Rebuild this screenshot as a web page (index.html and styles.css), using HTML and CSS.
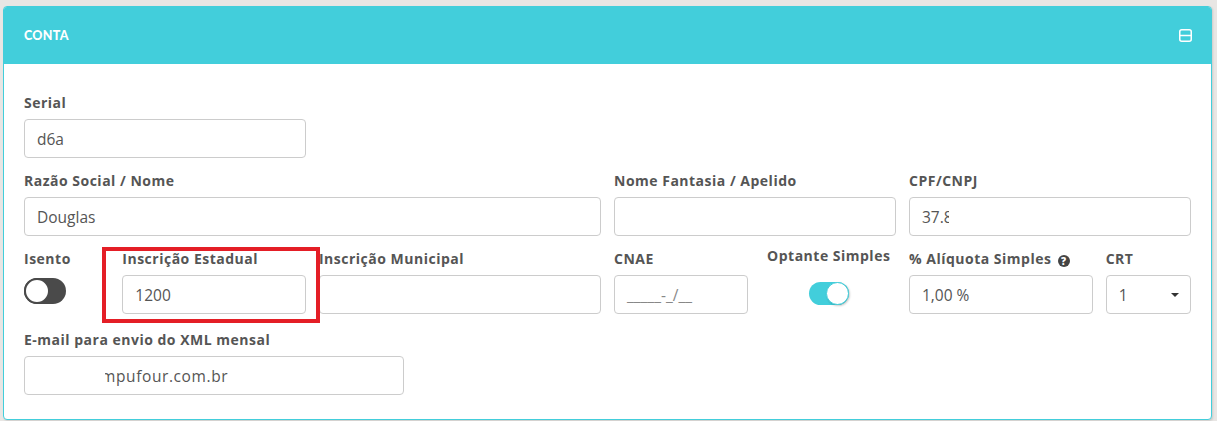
FILE: index.html
```html
<!DOCTYPE html>
<html lang="pt-BR">
<head>
<meta charset="utf-8">
<title>Conta</title>
<link rel="stylesheet" href="styles.css">
</head>
<body>
<section class="card">
  <header class="card-header">
    <h2 class="card-title">CONTA</h2>
    <svg class="collapse-icon" width="13" height="13" viewBox="0 0 13 13" aria-hidden="true">
      <rect x="0.75" y="0.75" width="11.5" height="11.5" rx="2" fill="none" stroke="#fff" stroke-width="1.5"/>
      <line x1="1" y1="6.5" x2="12" y2="6.5" stroke="#fff" stroke-width="1.5"/>
    </svg>
  </header>
  <div class="card-body">
    <div class="row">
      <div class="col col-3">
        <label class="lbl">Serial</label>
        <div class="field">d6a</div>
      </div>
    </div>
    <div class="row">
      <div class="col col-6">
        <label class="lbl">Razão Social / Nome</label>
        <div class="field">Douglas</div>
      </div>
      <div class="col col-3">
        <label class="lbl">Nome Fantasia / Apelido</label>
        <div class="field"></div>
      </div>
      <div class="col col-3">
        <label class="lbl">CPF/CNPJ</label>
        <div class="field"><span class="clip-cpf">37.8</span></div>
      </div>
    </div>
    <div class="row row-3">
      <div class="col col-1">
        <label class="lbl">Isento</label>
        <div class="switch switch-off"><span class="knob"></span></div>
      </div>
      <div class="col col-2">
        <label class="lbl">Inscrição Estadual</label>
        <div class="field">1200</div>
      </div>
      <div class="col col-3">
        <label class="lbl">Inscrição Municipal</label>
        <div class="field"></div>
      </div>
      <div class="col col-15">
        <label class="lbl">CNAE</label>
        <div class="field placeholder">_____-_/__</div>
      </div>
      <div class="col col-15 center">
        <label class="lbl lbl-up">Optante Simples</label>
        <div class="switch switch-on"><span class="knob"></span></div>
      </div>
      <div class="col col-2">
        <label class="lbl">% Alíquota Simples <span class="help">?</span></label>
        <div class="field">1,00 %</div>
      </div>
      <div class="col col-1">
        <label class="lbl">CRT</label>
        <div class="field select">1<span class="caret"></span></div>
      </div>
    </div>
    <div class="row last">
      <div class="col col-4">
        <label class="lbl">E-mail para envio do XML mensal</label>
        <div class="field"><span class="email-pad"></span><span class="clip-mail"><span class="clip-inner">mpufour.com.br</span></span></div>
      </div>
    </div>
    <div class="highlight"></div>
  </div>
</section>
</body>
</html>
```
FILE: styles.css
```css
* { box-sizing: border-box; }
html, body { margin: 0; padding: 0; }
body {
  background: #e8e6e4;
  font-family: "Open Sans", "Lato", sans-serif;
  padding: 6px 5px 0 3px;
  height: 421px;
  overflow: hidden;
}
.card {
  background: #fff;
  border: 1px solid #42cedb;
  border-radius: 4px;
  box-shadow: 1px 1px 2px rgba(0,0,0,0.12);
}
.card-header {
  background: #42cedb;
  height: 57px;
  display: flex;
  align-items: center;
  justify-content: space-between;
  padding: 0 19px 0 20px;
  border-radius: 3px 3px 0 0;
}
.card-title {
  margin: 0;
  color: #fff;
  font-family: "Lato", sans-serif;
  font-size: 12.5px;
  font-weight: 900;
  letter-spacing: 0.3px;
}
.collapse-icon { display: block; }
.card-body {
  position: relative;
  padding: 29px 20px 24px 20px;
}
.row {
  display: flex;
  margin: 0 -6.5px 13px -6.5px;
}
.row-3 { margin-bottom: 16px; }
.row.last { margin-bottom: 0; }
.col { padding: 0 6.5px; }
.col-1 { width: 8.3333%; }
.col-2 { width: 16.6667%; }
.col-3 { width: 25%; }
.col-4 { width: 33.3333%; }
.col-6 { width: 50%; }
.col-15 { width: 12.5%; }
.center { text-align: center; display: flex; flex-direction: column; align-items: center; }
.lbl {
  display: block;
  height: 20px;
  line-height: 20px;
  margin-bottom: 6px;
  font-size: 14px;
  font-weight: 700;
  letter-spacing: 0.5px;
  color: #555;
  white-space: nowrap;
}
.lbl-up { margin-top: -3px; margin-bottom: 9px; }
.field {
  height: 39px;
  border: 1px solid #ccc;
  border-radius: 4px;
  padding: 0 12px;
  display: flex;
  align-items: center;
  font-size: 15.5px;
  color: #555;
  white-space: nowrap;
  overflow: hidden;
}
.placeholder { color: #888; }
.select { position: relative; justify-content: space-between; padding-right: 11px; }
.caret {
  width: 0; height: 0;
  border-left: 4px solid transparent;
  border-right: 4px solid transparent;
  border-top: 4px solid #333;
}
.clip-cpf { display: inline-block; overflow: hidden; width: 27px; }
.email-pad { display: inline-block; width: 68px; }
.clip-mail { display: inline-block; overflow: hidden; }
.clip-inner { display: inline-block; margin-left: -4px; letter-spacing: 0.6px; }
.help {
  display: inline-flex;
  align-items: center;
  justify-content: center;
  width: 12px; height: 12px;
  border-radius: 50%;
  background: #444;
  color: #fff;
  font-size: 10px;
  font-weight: 800;
  letter-spacing: 0;
  vertical-align: -1px;
  margin-left: 2px;
}
.switch {
  position: relative;
  border-radius: 13px;
}
.switch-off {
  width: 42px; height: 26px;
  margin-top: 9px;
  background: #4a4a4a;
}
.switch-off .knob {
  position: absolute;
  left: 0; top: 0;
  width: 26px; height: 26px;
  border-radius: 50%;
  background: #fff;
  border: 2px solid #4a4a4a;
}
.switch-on {
  width: 40px; height: 23px;
  margin-top: 7px;
  background: #42cedb;
}
.switch-on .knob {
  position: absolute;
  right: 0; top: 0;
  width: 23px; height: 23px;
  border-radius: 50%;
  background: #fff;
  border: 1px solid #42cedb;
  box-shadow: 1px 1px 2px rgba(0,0,0,0.2);
}
.highlight {
  position: absolute;
  left: 98px;
  top: 183px;
  width: 218px;
  height: 76px;
  border: 4px solid #e41e26;
  pointer-events: none;
}
```
